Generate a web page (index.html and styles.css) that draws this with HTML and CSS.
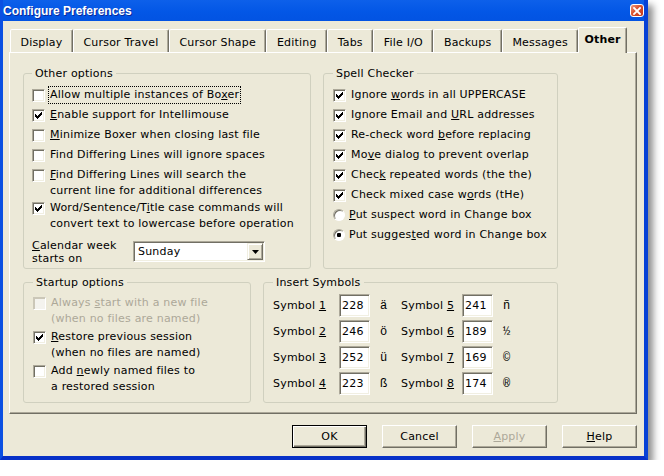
FILE: index.html
```html
<!DOCTYPE html>
<html lang="en">
<head>
<meta charset="utf-8">
<title>Configure Preferences</title>
<link rel="stylesheet" href="styles.css">
</head>
<body>
<svg class="defs" width="0" height="0" aria-hidden="true">
  <symbol id="tick" viewBox="0 0 11 11"><path d="M2 4h1v3h-1z M3 5h1v3h-1z M4 6h1v3h-1z M5 5h1v3h-1z M6 4h1v3h-1z M7 3h1v3h-1z M8 2h1v3h-1z"/></symbol>
</svg>
<div class="window">
  <div class="titlebar">
    <span class="title">Configure Preferences</span>
    <span class="close"><svg width="8" height="8" viewBox="0 0 8 8"><path d="M1 1 L7 7 M7 1 L1 7" stroke="#fff" stroke-width="1.8" stroke-linecap="square"/></svg></span>
  </div>
  <div class="client">
    <div class="tabs">
      <div class="tab">Display</div>
      <div class="tab">Cursor Travel</div>
      <div class="tab">Cursor Shape</div>
      <div class="tab">Editing</div>
      <div class="tab">Tabs</div>
      <div class="tab">File I/O</div>
      <div class="tab">Backups</div>
      <div class="tab">Messages</div>
      <div class="tab active">Other</div>
    </div>
    <div class="panel">
      <div class="row row1">
        <fieldset class="group other">
          <legend>Other options</legend>
          <div class="opt"><span class="cb"></span><span class="lbl focus">Allow multiple instances of Bo<u>x</u>er</span></div>
          <div class="opt"><span class="cb"><svg width="11" height="11"><use href="#tick"/></svg></span><span class="lbl"><u>E</u>nable support for Intellimouse</span></div>
          <div class="opt"><span class="cb"></span><span class="lbl"><u>M</u>inimize Boxer when closing last file</span></div>
          <div class="opt"><span class="cb"></span><span class="lbl">Find Differing Lines will ignore spaces</span></div>
          <div class="opt two"><span class="cb"></span><span class="lbl"><u>F</u>ind Differing Lines will search the<br>current line for additional differences</span></div>
          <div class="opt two"><span class="cb"><svg width="11" height="11"><use href="#tick"/></svg></span><span class="lbl">Word/Sentence/T<u>i</u>tle case commands will<br>convert text to lowercase before operation</span></div>
          <div class="cal">
            <span class="cal-lbl"><u>C</u>alendar week<br>starts on</span>
            <span class="select"><span class="sel-text">Sunday</span><span class="drop"><svg width="7" height="4" viewBox="0 0 7 4"><path d="M0 0h7L3.5 4z"/></svg></span></span>
          </div>
        </fieldset>
        <fieldset class="group spell">
          <legend>Spell Checker</legend>
          <div class="opt"><span class="cb"><svg width="11" height="11"><use href="#tick"/></svg></span><span class="lbl">Ignore <u>w</u>ords in all UPPERCASE</span></div>
          <div class="opt"><span class="cb"><svg width="11" height="11"><use href="#tick"/></svg></span><span class="lbl">Ignore Email and <u>U</u>RL addresses</span></div>
          <div class="opt"><span class="cb"><svg width="11" height="11"><use href="#tick"/></svg></span><span class="lbl">Re-check word <u>b</u>efore replacing</span></div>
          <div class="opt"><span class="cb"><svg width="11" height="11"><use href="#tick"/></svg></span><span class="lbl">Mo<u>v</u>e dialog to prevent overlap</span></div>
          <div class="opt"><span class="cb"><svg width="11" height="11"><use href="#tick"/></svg></span><span class="lbl">Chec<u>k</u> repeated words (the the)</span></div>
          <div class="opt"><span class="cb"><svg width="11" height="11"><use href="#tick"/></svg></span><span class="lbl">Check mixed case w<u>o</u>rds (tHe)</span></div>
          <div class="opt rad"><span class="rb"></span><span class="lbl"><u>P</u>ut suspect word in Change box</span></div>
          <div class="opt rad"><span class="rb"><span class="dot"></span></span><span class="lbl">Put sugges<u>t</u>ed word in Change box</span></div>
        </fieldset>
      </div>
      <div class="row row2">
        <fieldset class="group startup">
          <legend>Startup options</legend>
          <div class="opt two disabled"><span class="cb"></span><span class="lbl">Always <u>s</u>tart with a new file<br>(when no files are named)</span></div>
          <div class="opt two"><span class="cb"><svg width="11" height="11"><use href="#tick"/></svg></span><span class="lbl"><u>R</u>estore previous session<br>(when no files are named)</span></div>
          <div class="opt two"><span class="cb"></span><span class="lbl">Add <u>n</u>ewly named files to<br>a restored session</span></div>
        </fieldset>
        <fieldset class="group symbols">
          <legend>Insert Symbols</legend>
          <div class="symgrid">
            <span>Symbol <u>1</u></span><span class="inp">228</span><span class="ch">ä</span>
            <span>Symbol <u>5</u></span><span class="inp">241</span><span class="ch">ñ</span>
            <span>Symbol <u>2</u></span><span class="inp">246</span><span class="ch">ö</span>
            <span>Symbol <u>6</u></span><span class="inp">189</span><span class="ch">½</span>
            <span>Symbol <u>3</u></span><span class="inp">252</span><span class="ch">ü</span>
            <span>Symbol <u>7</u></span><span class="inp">169</span><span class="ch">©</span>
            <span>Symbol <u>4</u></span><span class="inp">223</span><span class="ch">ß</span>
            <span>Symbol <u>8</u></span><span class="inp">174</span><span class="ch">®</span>
          </div>
        </fieldset>
      </div>
    </div>
    <div class="buttons">
      <span class="btn default">OK</span>
      <span class="btn">Cancel</span>
      <span class="btn disabled"><u>A</u>pply</span>
      <span class="btn"><u>H</u>elp</span>
    </div>
  </div>
</div>
</body>
</html>
```
FILE: styles.css
```css
* { box-sizing: border-box; }
html, body { margin: 0; padding: 0; background: #fff; }
body {
  font-family: "DejaVu Sans", Verdana, sans-serif;
  font-size: 11px;
  color: #000;
  letter-spacing: 0.2px;
}
.defs { position: absolute; width: 0; height: 0; overflow: hidden; }
u { text-underline-offset: 1px; }

.window {
  width: 648px;
  height: 460px;
  border-style: solid;
  border-width: 0 4px 4px 3px;
  border-color: #0A4FE0 #0641D6 #0630C8 #0B50E2;
  background: #ECE9D8;
  box-shadow: 5px 5px 7px rgba(0, 0, 0, 0.45);
  display: flex;
  flex-direction: column;
}

.titlebar {
  height: 21px;
  flex: none;
  display: flex;
  align-items: center;
  background: linear-gradient(#0D60EA, #0357E6 55%, #0253E2);
}
.title {
  font-family: "Liberation Sans", Arial, sans-serif;
  font-weight: bold;
  font-size: 12px;
  letter-spacing: 0;
  color: #fff;
  text-shadow: 1px 1px 0 #0A2A9A;
  padding-top: 1px;
}
.close {
  margin-left: auto;
  width: 14px;
  height: 13px;
  border: 1px solid #fff;
  border-radius: 3px;
  background: linear-gradient(135deg, #EE9A80, #D9502D 45%, #C2381A);
  display: flex;
  align-items: center;
  justify-content: center;
}
.close svg { display: block; }

.client {
  flex: 1;
  padding-top: 6px;
  display: flex;
  flex-direction: column;
}

.tabs {
  height: 25px;
  margin-left: 7px;
  display: flex;
  align-items: flex-end;
}
.tab {
  height: 23px;
  padding: 5px 9.5px 0;
  line-height: 15px;
  white-space: nowrap;
  border-style: solid;
  border-width: 1px 1px 0 1px;
  border-color: #fff #716F64 transparent #fff;
  border-radius: 2px 2px 0 0;
  box-shadow: inset -1px 0 0 #ACA899;
  background: #ECE9D8;
}
.tab.active {
  height: 26px;
  padding: 4px 5px 0;
  font-weight: bold;
  margin-bottom: -1px;
  position: relative;
  z-index: 1;
}

.panel {
  margin-left: 6px;
  width: 628px;
  height: 362px;
  border: 1px solid;
  border-color: #fff #716F64 #716F64 #fff;
  box-shadow: inset -1px -1px 0 #ACA899;
  padding: 14px 0 0 13px;
}
.row { display: flex; gap: 12px; }
.row1 { margin-bottom: 7px; }

.group {
  margin: 0;
  padding: 7px 8px 0;
  border: 1px solid #D0D0BF;
  border-radius: 3px;
  min-inline-size: 0;
}
.group legend {
  padding: 0 3px;
  line-height: 13px;
}
.other { width: 288px; height: 202px; }
.spell { width: 235px; height: 202px; padding-left: 9px; }
.startup { width: 228px; height: 127px; padding: 6px 8px 0 9px; }
.symbols { width: 295px; height: 127px; padding: 5px 0 0 9px; }

.opt {
  display: flex;
  align-items: flex-start;
  gap: 5px;
  line-height: 16px;
  margin-bottom: 4px;
  white-space: nowrap;
}
.opt.two { margin-bottom: 1px; }
.startup .opt.two { margin-bottom: 2px; }
.opt.rad { gap: 4px; margin-top: 1px; }
.opt.disabled { color: #ACA899; }

.cb {
  flex: none;
  width: 13px;
  height: 13px;
  margin-top: 2px;
  border: 1px solid;
  border-color: #ACA899 #fff #fff #ACA899;
  box-shadow: inset 1px 1px 0 #716F64, inset -1px -1px 0 #F1EFE2;
  background: #fff;
}
.cb svg { display: block; fill: #000; shape-rendering: crispEdges; }
.disabled .cb {
  background: #F4F3EE;
  border-color: #CBC7B8 #fff #fff #CBC7B8;
  box-shadow: inset 1px 1px 0 #CBC7B8;
}
.rb {
  flex: none;
  width: 12px;
  height: 12px;
  margin-top: 2px;
  border-radius: 50%;
  border: 1px solid;
  border-color: #ACA899 #fff #fff #ACA899;
  box-shadow: inset 1px 1px 0 #716F64;
  background: #fff;
  display: flex;
  align-items: center;
  justify-content: center;
}
.dot { width: 4px; height: 4px; border-radius: 1px; background: #000; }

.focus {
  outline: 1px dotted #000;
  padding: 0 1px;
  margin-left: -1px;
}

.cal {
  display: flex;
  align-items: center;
  margin-top: 6.5px;
}
.cal-lbl { width: 101px; line-height: 13px; }
.select {
  width: 132px;
  height: 21px;
  border: 1px solid;
  border-color: #ACA899 #fff #fff #ACA899;
  box-shadow: inset 1px 1px 0 #716F64, inset -1px -1px 0 #F1EFE2;
  background: #fff;
  display: flex;
  align-items: center;
  justify-content: space-between;
  padding: 0 1px 0 4px;
}
.drop {
  width: 16px;
  height: 17px;
  border: 1px solid;
  border-color: #F1EFE2 #716F64 #716F64 #F1EFE2;
  box-shadow: inset 1px 1px 0 #fff, inset -1px -1px 0 #ACA899;
  background: #ECE9D8;
  display: flex;
  align-items: center;
  justify-content: center;
}
.drop svg { display: block; fill: #000; }

.symgrid {
  display: grid;
  grid-template-columns: 66px 31px 31px 61px 31px auto;
  grid-auto-rows: 23px;
  row-gap: 3px;
  align-items: center;
}
.inp {
  height: 23px;
  border: 1px solid;
  border-color: #ACA899 #fff #fff #ACA899;
  box-shadow: inset 1px 1px 0 #716F64, inset -1px -1px 0 #F1EFE2;
  background: #fff;
  padding-left: 2px;
  line-height: 21px;
}
.ch {
  padding-left: 10px;
  font-family: "Liberation Mono", "Courier New", monospace;
  font-size: 12px;
  letter-spacing: 0;
}

.buttons {
  display: flex;
  justify-content: flex-end;
  gap: 15px;
  margin-top: 11px;
  padding-right: 7px;
}
.btn {
  width: 75px;
  height: 23px;
  border: 1px solid;
  border-color: #fff #716F64 #716F64 #fff;
  box-shadow: inset -1px -1px 0 #ACA899;
  background: #ECE9D8;
  text-align: center;
  line-height: 21px;
}
.btn.default {
  border-color: #000;
  box-shadow: inset 1px 1px 0 #fff, inset -1px -1px 0 #716F64, inset -2px -2px 0 #ACA899;
}
.btn.disabled { color: #ACA899; }
```
